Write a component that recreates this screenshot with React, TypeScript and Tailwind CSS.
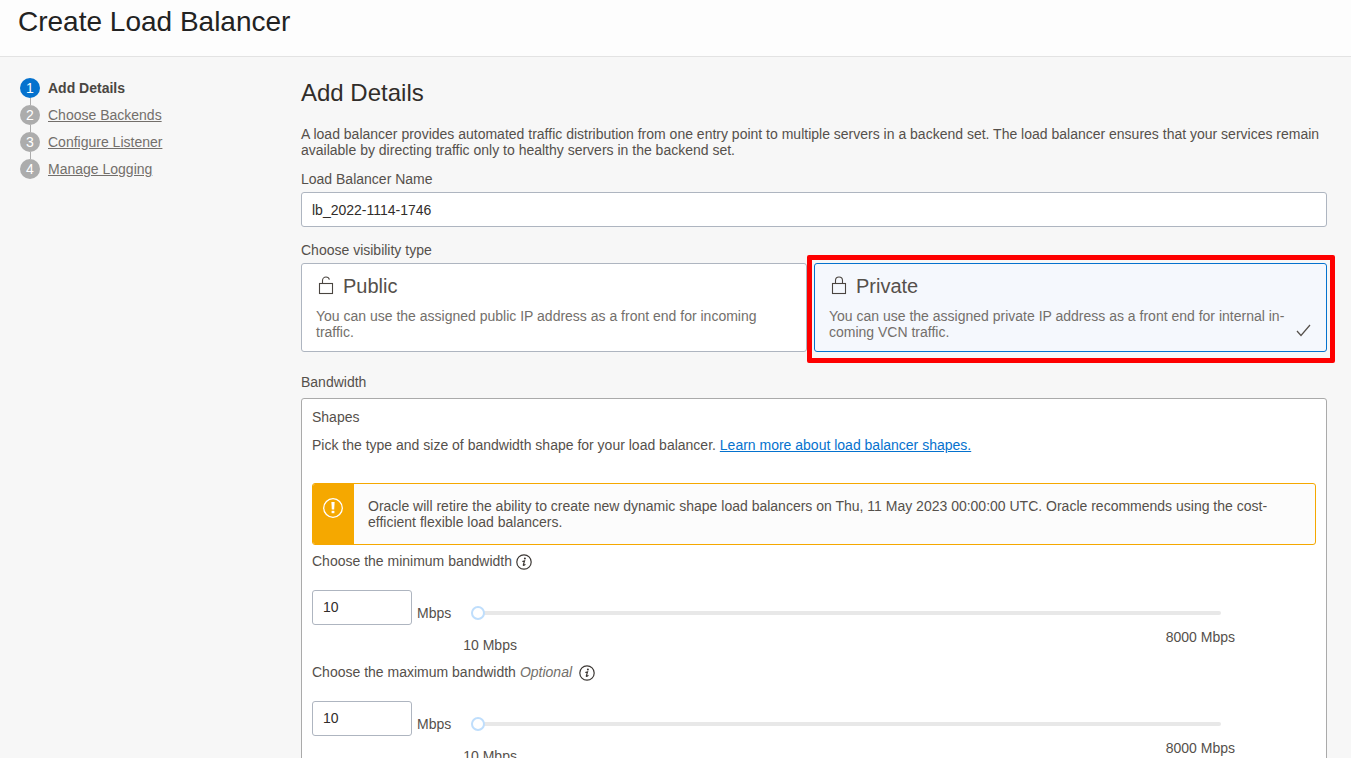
import { useState } from "react";

const steps = ["Add Details", "Choose Backends", "Configure Listener", "Manage Logging"];

function LockIcon({ open = false }: { open?: boolean }) {
  return (
    <svg width="17" height="20" viewBox="0 0 17 20" fill="none" stroke="#4a4540" strokeWidth="1.1" aria-hidden="true">
      <rect x="1.5" y="7.5" width="13" height="10" />
      {open ? (
        <path d="M4.5 7.5V4.5A3.5 3.5 0 0 1 8 1A3.5 3.5 0 0 1 11.4 3.7" />
      ) : (
        <path d="M4.5 7.5V4.5A3.5 3.5 0 0 1 11.5 4.5V7.5" />
      )}
    </svg>
  );
}

function InfoIcon() {
  return (
    <svg width="16" height="16" viewBox="0 0 16 16" fill="none" aria-hidden="true">
      <circle cx="8" cy="8" r="7.2" stroke="#3c3835" strokeWidth="1.2" />
      <circle cx="8.9" cy="4.6" r="1" fill="#3c3835" />
      <path d="M6.3 7.5L8.5 6.8L7.3 11Q7.2 12 9.4 10.3" stroke="#3c3835" strokeWidth="1.2" />
    </svg>
  );
}

function AlertIcon() {
  return (
    <svg width="20" height="20" viewBox="0 0 20 20" fill="none" aria-hidden="true">
      <circle cx="10" cy="10" r="9.3" stroke="#fff" strokeWidth="1.3" />
      <path d="M8.4 4H11.6L11.2 11.6H8.8Z" fill="#fff" />
      <rect x="8.6" y="12.8" width="2.8" height="2.4" fill="#fff" />
    </svg>
  );
}

function Tile({
  title,
  text,
  open,
  checked,
  onSelect,
}: {
  title: string;
  text: string;
  open?: boolean;
  checked: boolean;
  onSelect: () => void;
}) {
  return (
    <label
      className={`relative block h-full rounded-[3px] border pt-2 pr-10 pb-[11px] pl-3.5 ${
        checked ? "border-[#0572ce] bg-[#f5f8fd]" : "border-[#aeb5c0] bg-white"
      }`}
    >
      <input type="radio" name="visibility" className="sr-only" checked={checked} onChange={onSelect} />
      <span className="flex h-7 items-center gap-2 pl-0.5 text-xl text-[#55504b]">
        <LockIcon open={open} />
        {title}
      </span>
      <span className="mt-2 block text-[#736f6b]">{text}</span>
      {checked && (
        <svg className="absolute right-[15px] bottom-3.5" width="15" height="13" viewBox="0 0 15 13" fill="none" stroke="#55504b" strokeWidth="1.2" aria-hidden="true">
          <path d="M1 7L5 11.5L14 1" />
        </svg>
      )}
    </label>
  );
}

function Bandwidth({ id, label, optional = false }: { id: string; label: string; optional?: boolean }) {
  const [value, setValue] = useState(10);
  return (
    <div className="h-[111px]">
      <div className="flex h-4 items-center gap-1">
        <label htmlFor={id}>{label}</label>
        {optional && <em className="mr-[3px] text-[#736f6b]">Optional</em>}
        <button type="button" className="mt-0.5" aria-label="More information">
          <InfoIcon />
        </button>
      </div>
      <div className="mt-[21px] flex items-start">
        <input
          id={id}
          value={value}
          onChange={(e) => setValue(Number(e.target.value) || 0)}
          className="h-[35px] w-[100px] rounded-[3px] border border-[#aeb5c0] bg-white px-2.5 pb-0.5 text-[#312d2a]"
        />
        <span className="mt-[15px] ml-[5px]">Mbps</span>
        <div className="mt-4 mr-[81px] ml-3 flex-1">
          <div className="pr-3.5 pl-2">
            <input
              type="range"
              aria-label={label}
              min={10}
              max={8000}
              value={value}
              onChange={(e) => setValue(Number(e.target.value))}
              className="block h-3.5 w-full appearance-none bg-transparent [&::-webkit-slider-runnable-track]:h-1 [&::-webkit-slider-runnable-track]:rounded-sm [&::-webkit-slider-runnable-track]:bg-[#e8e8e8] [&::-webkit-slider-thumb]:-mt-[5px] [&::-webkit-slider-thumb]:size-3.5 [&::-webkit-slider-thumb]:appearance-none [&::-webkit-slider-thumb]:rounded-full [&::-webkit-slider-thumb]:border-2 [&::-webkit-slider-thumb]:border-[#bfdefc] [&::-webkit-slider-thumb]:bg-white"
            />
          </div>
          <div className="mt-[9px] flex justify-between">
            <span className="mt-2">10 Mbps</span>
            <span>8000 Mbps</span>
          </div>
        </div>
      </div>
    </div>
  );
}

export default function App() {
  const [visibility, setVisibility] = useState("private");
  return (
    <div className="h-screen overflow-y-auto bg-[#f7f7f7] font-['Liberation_Sans',Arial,sans-serif] text-sm leading-4 text-[#55504b] [scrollbar-width:none]">
      <header className="h-[57px] border-b border-[#e3e3e3] bg-[#fdfdfd] px-[18px] pt-1">
        <h1 className="text-[28px] leading-9 text-[#222]">Create Load Balancer</h1>
      </header>
      <div className="flex">
        <aside className="w-[301px] shrink-0 pt-[21px] pl-5">
          <ol>
            {steps.map((step, i) => (
              <li key={step} className="flex items-start gap-2">
                <div className="flex w-5 flex-col items-center">
                  <span
                    className={`flex size-5 items-center justify-center rounded-full text-white ${
                      i === 0 ? "bg-[#0572ce]" : "bg-[#acacac]"
                    }`}
                  >
                    {i + 1}
                  </span>
                  {i < steps.length - 1 && <span className="h-[7px] w-px bg-[#acacac]" />}
                </div>
                {i === 0 ? (
                  <span className="leading-5 font-bold text-[#4a4642]">{step}</span>
                ) : (
                  <a href="#" className="leading-5 text-[#736f6b] underline">
                    {step}
                  </a>
                )}
              </li>
            ))}
          </ol>
        </aside>
        <main className="min-w-0 flex-1 pt-5 pr-6">
          <h2 className="text-2xl text-[#312d2a]">Add Details</h2>
          <p className="mt-[17px]">
            A load balancer provides automated traffic distribution from one entry point to multiple servers in a
            backend set. The load balancer ensures that your services remain available by directing traffic only to
            healthy servers in the backend set.
          </p>
          <label htmlFor="lb-name" className="mt-[13px] block">
            Load Balancer Name
          </label>
          <input
            id="lb-name"
            defaultValue="lb_2022-1114-1746"
            className="mt-[5px] block h-[35px] w-full rounded-[3px] border border-[#aeb5c0] bg-white px-2.5 text-[#312d2a]"
          />
          <fieldset className="mt-[15px]">
            <legend>Choose visibility type</legend>
            <div className="mt-[5px] grid grid-cols-2">
              <div className="mr-[7px]">
                <Tile
                  title="Public"
                  text="You can use the assigned public IP address as a front end for incoming traffic."
                  open
                  checked={visibility === "public"}
                  onSelect={() => setVisibility("public")}
                />
              </div>
              <div className="relative">
                <Tile
                  title="Private"
                  text={"You can use the assigned private IP address as a front end for internal in\u00adcoming VCN traffic."}
                  checked={visibility === "private"}
                  onSelect={() => setVisibility("private")}
                />
                <div className="pointer-events-none absolute -top-2 -right-2 -bottom-[11px] -left-[7px] rounded-xs border-[5px] border-[#fe0000]" />
              </div>
            </div>
          </fieldset>
          <h3 className="mt-[22px]">Bandwidth</h3>
          <section className="mt-2 rounded-[3px] border border-[#aaa] bg-white p-2.5">
            <h4>Shapes</h4>
            <p className="mt-3">
              Pick the type and size of bandwidth shape for your load balancer.{" "}
              <a href="#" className="text-[#0572ce] underline">
                Learn more about load balancer shapes.
              </a>
            </p>
            <div role="alert" className="mt-[30px] flex overflow-hidden rounded-[3px] border border-[#f5a800] bg-[#fcfcfc]">
              <div className="flex w-[41px] shrink-0 justify-center bg-[#f5a800] pt-3.5 pr-px">
                <AlertIcon />
              </div>
              <p className="p-3.5">
                Oracle will retire the ability to create new dynamic shape load balancers on Thu, 11 May 2023 00:00:00
                UTC. Oracle recommends using the cost-efficient flexible load balancers.
              </p>
            </div>
            <div className="mt-2">
              <Bandwidth id="min-bandwidth" label="Choose the minimum bandwidth" />
              <Bandwidth id="max-bandwidth" label="Choose the maximum bandwidth" optional />
            </div>
          </section>
        </main>
      </div>
    </div>
  );
}
